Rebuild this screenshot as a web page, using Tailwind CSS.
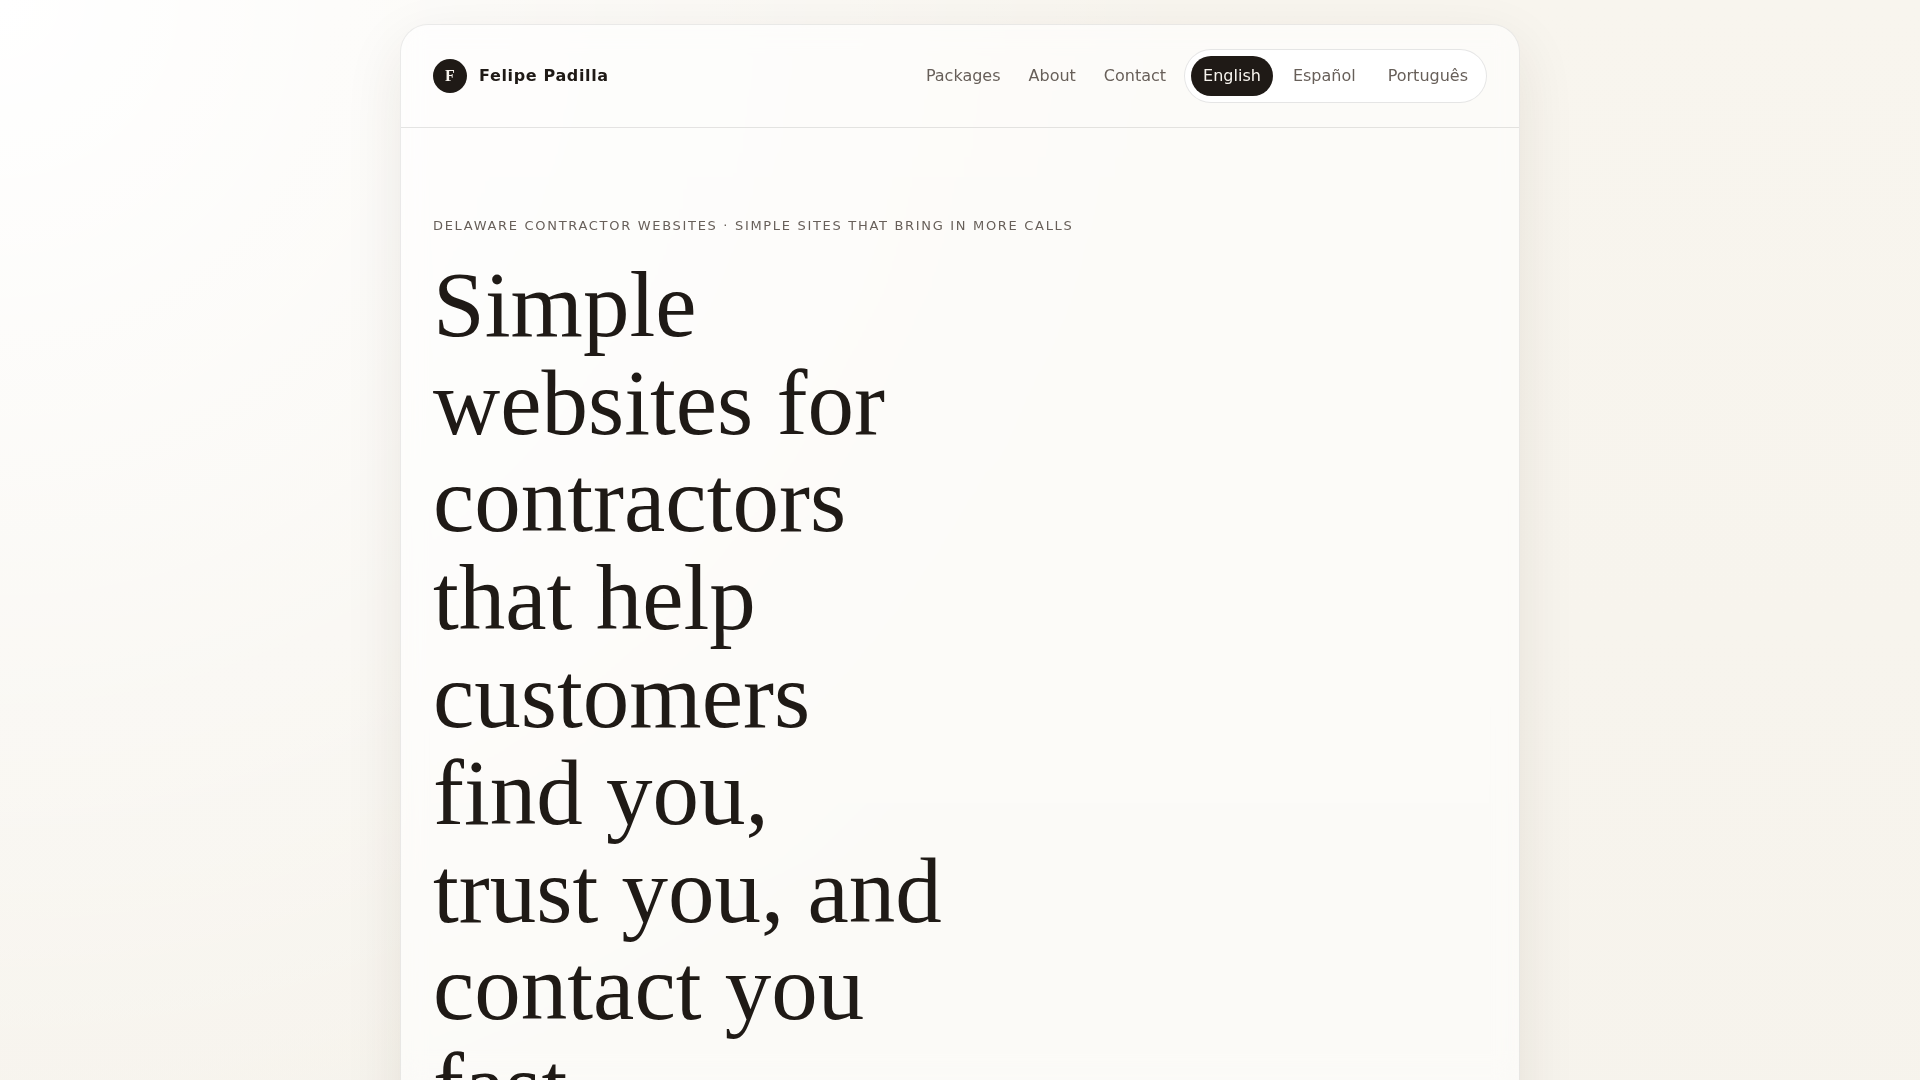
<!DOCTYPE html>
<html lang="en">
  <head>
    <meta charset="utf-8" />
    <meta name="viewport" content="width=device-width, initial-scale=1" />
    <title>Felipe Padilla | Delaware Contractor Websites</title>
    <script src="https://cdn.jsdelivr.net/npm/@tailwindcss/browser@4"></script>
  </head>
  <body class="min-h-screen overflow-x-hidden bg-[radial-gradient(circle_at_top_left,#ffffff_0%,#ffffff00_52%),linear-gradient(180deg,#f8f5ee_0%,#f6f3ec_100%)] font-['DejaVu_Sans',sans-serif] text-base text-[#1f1a16]">
    <div class="mx-auto my-6 max-w-[1120px] rounded-[28px] border border-black/8 bg-white/60 shadow-[0_20px_60px_rgba(50,30,20,0.09)] backdrop-blur-md">
      <header class="flex flex-wrap items-center justify-between gap-4 border-b border-black/10 px-8 py-6">
        <a href="#" class="flex items-center gap-3 font-bold tracking-[0.04em]">
          <span class="flex size-[34px] items-center justify-center rounded-full bg-[#1f1a16] font-['Liberation_Serif',serif] text-base tracking-normal text-[#f8f5ef]">F</span>
          <span>Felipe Padilla</span>
        </a>
        <div class="flex flex-wrap items-center gap-[18px]">
          <nav class="flex gap-7 text-[#675f59]">
            <a href="#packages">Packages</a>
            <a href="#about">About</a>
            <a href="#contact">Contact</a>
          </nav>
          <div class="flex gap-2 rounded-full border border-black/10 bg-white p-1.5 text-[#675f59]">
            <button type="button" class="rounded-full bg-[#1f1a16] px-3 py-2 text-[#f8f5ef]">English</button>
            <button type="button" class="rounded-full px-3 py-2">Español</button>
            <button type="button" class="rounded-full px-3 py-2">Português</button>
          </div>
        </div>
      </header>

      <main class="px-8 py-[88px]">
        <p class="mb-5 text-[13px] leading-5 tracking-[0.13em] text-[#675f59] uppercase">Delaware contractor websites · Simple sites that bring in more calls</p>
        <div class="grid gap-8 lg:grid-cols-2">
          <h1 class="font-['Liberation_Serif',serif] text-[93px] leading-[1.05]">Simple websites for contractors that help customers find you, trust you, and contact you fast.</h1>
        </div>
      </main>
    </div>
  </body>
</html>
